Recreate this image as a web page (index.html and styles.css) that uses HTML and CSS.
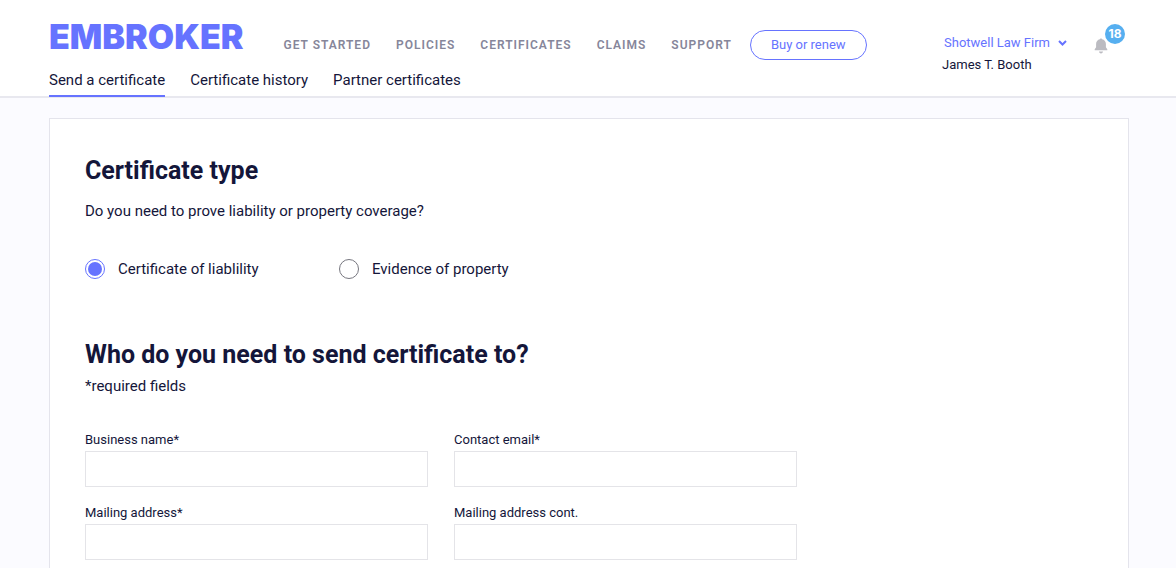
FILE: index.html
```html
<!DOCTYPE html>
<html lang="en">
  <head>
    <meta charset="UTF-8" />
    <meta name="viewport" content="width=device-width, initial-scale=1.0" />
    <title>Embroker - Send a certificate</title>
    <link rel="stylesheet" href="styles.css">
  </head>

  <body>
    <header>
      <div class="header_left">
        <div class="top_row">
          <a href="#" class="logo">EMBROKER</a>
          <nav class="main_nav">
            <a href="#">GET STARTED</a>
            <a href="#">POLICIES</a>
            <a href="#">CERTIFICATES</a>
            <a href="#">CLAIMS</a>
            <a href="#">SUPPORT</a>
          </nav>
          <button type="button" class="buy">Buy or renew</button>
        </div>
        <nav class="tabs">
          <a href="#" class="active">Send a certificate</a>
          <a href="#">Certificate history</a>
          <a href="#">Partner certificates</a>
        </nav>
      </div>

      <div class="account">
        <div class="user">
          <button type="button" class="firm">
            Shotwell Law Firm
            <svg width="9" height="6" viewBox="0 0 9 6" aria-hidden="true">
              <path d="M1 1l3.500 3.500L8 1" fill="none" stroke="currentColor" stroke-width="2" />
            </svg>
          </button>
          <p>James T. Booth</p>
        </div>
        <button type="button" class="bell" aria-label="Notifications">
          <svg width="14" height="16" viewBox="0 0 14 16" aria-hidden="true">
            <path d="M7 0.500C6.300 0.500 5.900 0.900 5.900 1.300C3.500 1.800 2.100 3.700 2.100 6V9.300L0.700 11.300V12.300H13.300V11.300L11.900 9.300V6C11.900 3.700 10.500 1.800 8.100 1.300C8.100 0.900 7.700 0.500 7 0.500Z" fill="#bbbbc1" />
            <path d="M5 13.600H9C9 14.700 8.100 15.400 7 15.400S5 14.700 5 13.600Z" fill="#bbbbc1" />
          </svg>
          <span class="badge">18</span>
        </button>
      </div>
    </header>

    <main>
      <form class="card">
        <section>
          <h1>Certificate type</h1>
          <p class="question">Do you need to prove liability or property coverage?</p>
          <div class="choices">
            <label><input type="radio" name="type" value="liability" checked />Certificate of liablility</label>
            <label><input type="radio" name="type" value="property" />Evidence of property</label>
          </div>
        </section>

        <section>
          <h2>Who do you need to send certificate to?</h2>
          <p class="required">*required fields</p>
          <div class="fields">
            <div class="field">
              <label for="business">Business name*</label>
              <input type="text" id="business" />
            </div>
            <div class="field">
              <label for="email">Contact email*</label>
              <input type="email" id="email" />
            </div>
            <div class="field">
              <label for="address">Mailing address*</label>
              <input type="text" id="address" />
            </div>
            <div class="field">
              <label for="address2">Mailing address cont.</label>
              <input type="text" id="address2" />
            </div>
          </div>
        </section>
      </form>
    </main>
  </body>
</html>
```
FILE: styles.css
```css
* {
  box-sizing: border-box;
}

body {
  margin: 0;
  font-family: Roboto, sans-serif;
  font-size: 15px;
  line-height: 20px;
  color: #14163a;
  background-color: #fbfbff;
}

h1,
h2,
p {
  margin: 0;
}

a {
  color: inherit;
  text-decoration: none;
}

button {
  font-family: inherit;
  font-size: 13px;
  background: none;
  border: none;
  padding: 0;
  cursor: pointer;
}

header {
  display: flex;
  justify-content: space-between;
  padding: 0 47px 0 49px;
  background-color: white;
  border-bottom: 2px solid #e8e8ef;
}

.header_left {
  display: flex;
  flex-direction: column;
}

.top_row {
  display: flex;
  align-items: baseline;
  padding-top: 17px;
}

.logo {
  font-family: Inter, sans-serif;
  font-weight: 900;
  font-size: 34px;
  line-height: 40px;
  color: #6673ff;
}

.main_nav {
  display: flex;
  gap: 25px;
  margin-left: 40px;
  font-size: 12px;
  font-weight: 600;
  letter-spacing: 1px;
  color: #86869a;
}

.buy {
  height: 30px;
  margin-left: 18px;
  padding: 0 20px;
  color: #6673ff;
  border: 1px solid #6673ff;
  border-radius: 15px;
}

.tabs {
  display: flex;
  gap: 25px;
  margin-top: 10px;
  margin-bottom: -1px;
}

.tabs a {
  padding-bottom: 5px;
  border-bottom: 2px solid transparent;
}

.tabs .active {
  border-color: #6673ff;
}

.account {
  display: flex;
  align-items: flex-start;
  padding-top: 32px;
}

.user {
  font-size: 13px;
  line-height: 22px;
}

.firm {
  display: flex;
  align-items: center;
  gap: 8px;
  padding-left: 2px;
  line-height: 22px;
  color: #6673ff;
}

.bell {
  position: relative;
  width: 14px;
  height: 16px;
  margin: 6px 21px 0 27px;
}

.bell svg {
  display: block;
}

.badge {
  position: absolute;
  left: 11px;
  bottom: 10px;
  width: 20px;
  height: 20px;
  border-radius: 50%;
  font-family: Inter, sans-serif;
  font-size: 12px;
  font-weight: 700;
  line-height: 20px;
  text-align: center;
  color: white;
  background-color: #56aff0;
}

main {
  padding: 20px 47px 40px 49px;
}

.card {
  padding: 36px 35px;
  background-color: white;
  border: 1px solid #e4e4ec;
}

h1,
h2 {
  font-size: 25px;
  line-height: 32px;
  font-weight: 700;
}

.question {
  margin-top: 14px;
}

.choices {
  display: flex;
  margin: 38px 0 60px;
}

.choices label {
  display: flex;
  align-items: center;
  gap: 13px;
  width: 254px;
}

.choices input {
  appearance: none;
  width: 20px;
  height: 20px;
  margin: 0;
  padding: 2px;
  border: 1px solid #77777f;
  border-radius: 50%;
}

.choices input:checked {
  border-color: #6673ff;
  background: #6673ff content-box;
}

.required {
  margin-top: 5px;
}

.fields {
  display: grid;
  grid-template-columns: repeat(2, 1fr);
  gap: 16px 26px;
  max-width: 712px;
  margin-top: 34px;
}

.field label {
  display: block;
  margin-bottom: 1px;
  font-size: 13px;
}

.field input {
  display: block;
  width: 100%;
  height: 36px;
  padding: 0 10px;
  font: inherit;
  border: 1px solid #e4e4e8;
}
```
